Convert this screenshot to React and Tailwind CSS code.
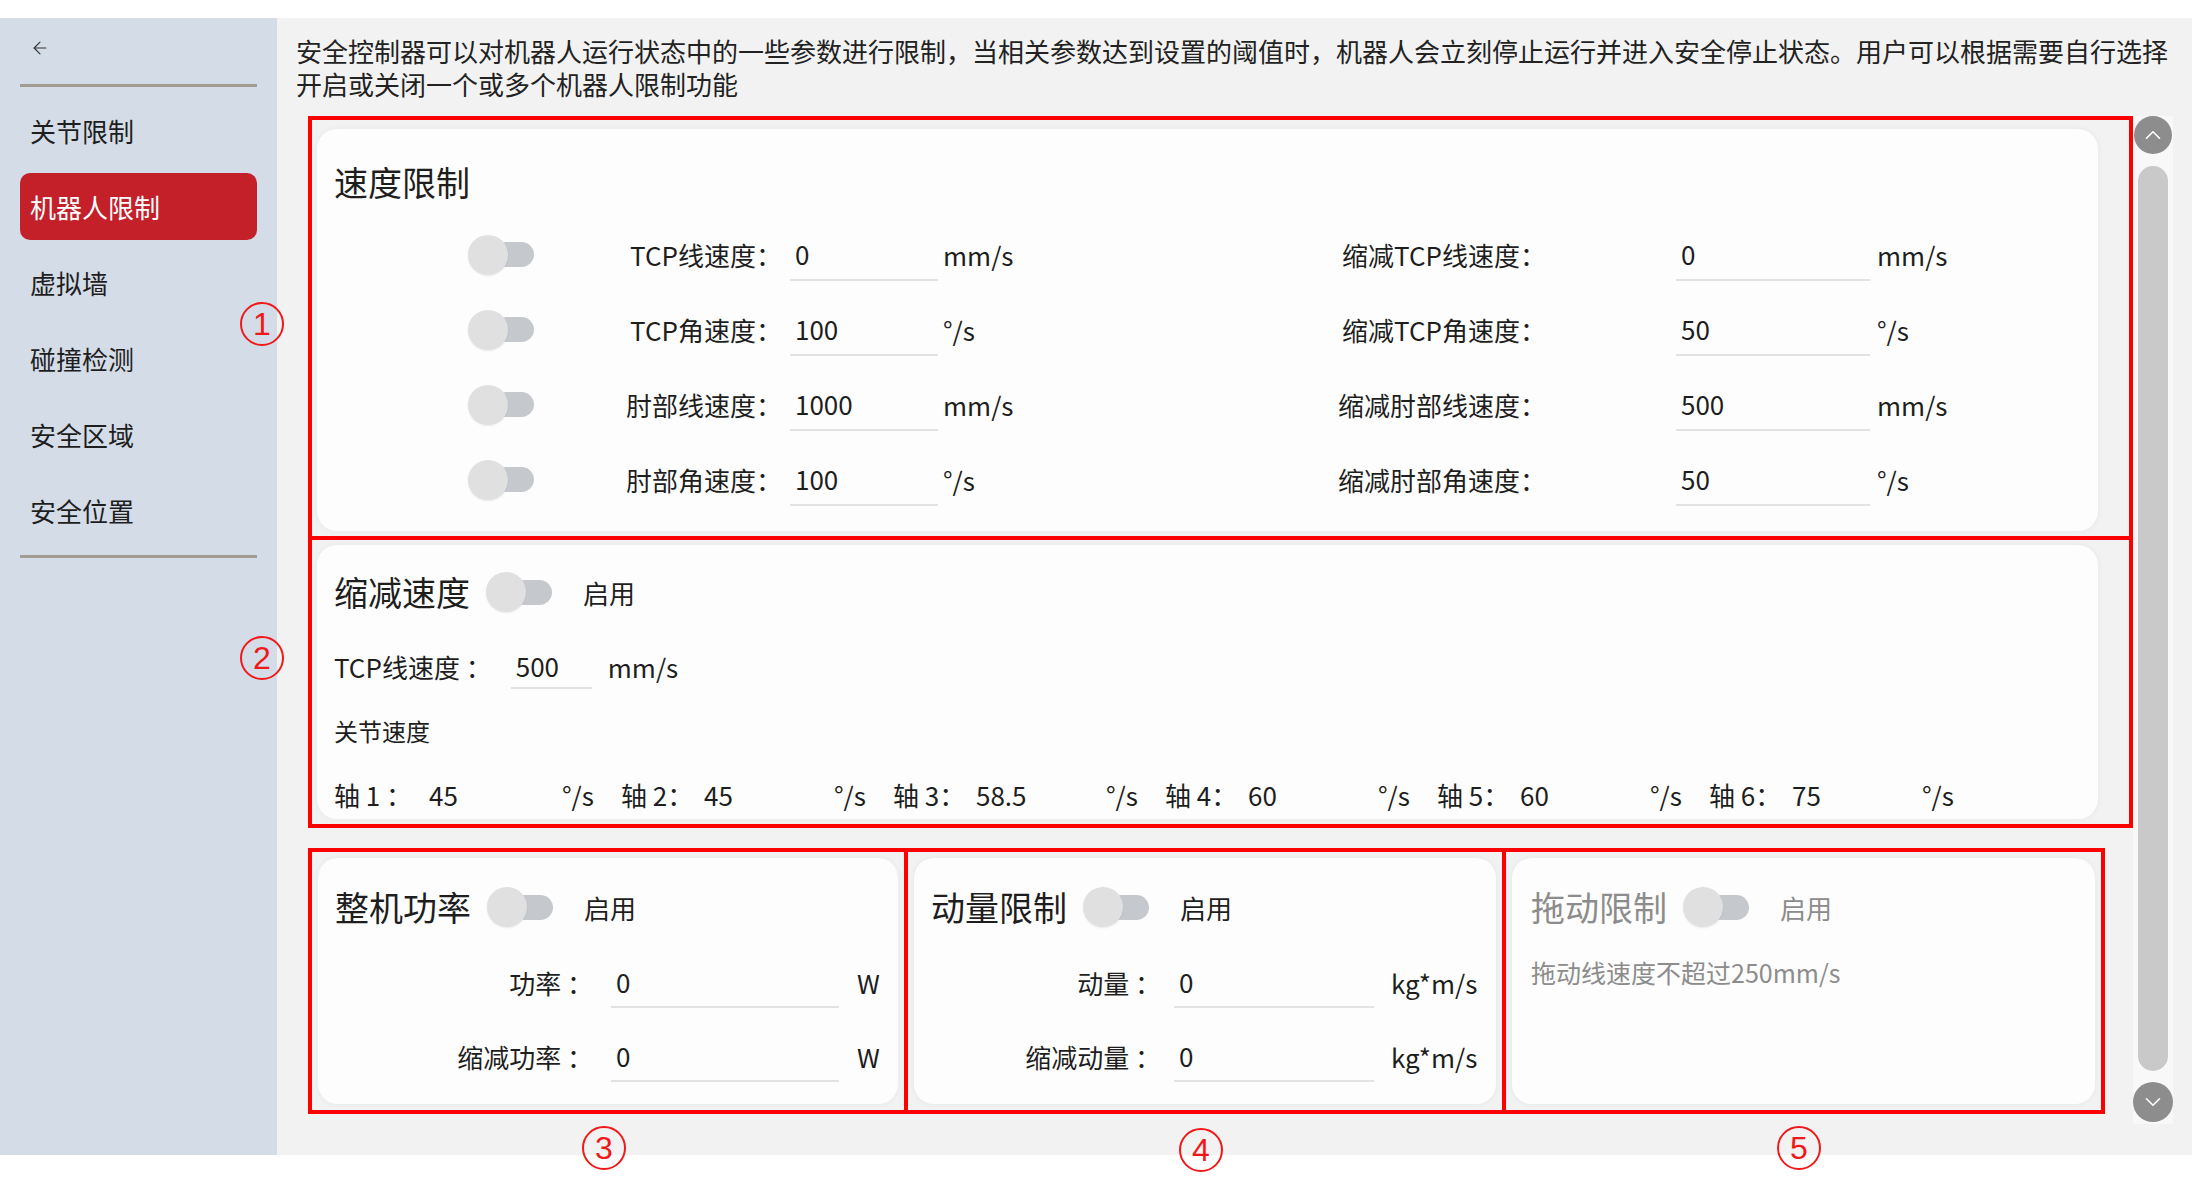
import React from 'react';
import { ArrowLeft, ChevronUp, ChevronDown } from 'lucide-react';

const FONT = { fontFamily: "'Noto Sans CJK SC', 'Noto Sans', sans-serif" };

const speedRows = [
	{ label: 'TCP线速度：', value: '0', unit: 'mm/s', rLabel: '缩减TCP线速度：', rValue: '0', rUnit: 'mm/s' },
	{ label: 'TCP角速度：', value: '100', unit: '°/s', rLabel: '缩减TCP角速度：', rValue: '50', rUnit: '°/s' },
	{ label: '肘部线速度：', value: '1000', unit: 'mm/s', rLabel: '缩减肘部线速度：', rValue: '500', rUnit: 'mm/s' },
	{ label: '肘部角速度：', value: '100', unit: '°/s', rLabel: '缩减肘部角速度：', rValue: '50', rUnit: '°/s' }
];

const axes = [
	{ label: '轴 1 ：', value: '45' },
	{ label: '轴 2：', value: '45' },
	{ label: '轴 3：', value: '58.5' },
	{ label: '轴 4：', value: '60' },
	{ label: '轴 5：', value: '60' },
	{ label: '轴 6：', value: '75' }
];

const menu = ['关节限制', '机器人限制', '虚拟墙', '碰撞检测', '安全区域', '安全位置'];

function Toggle() {
	return (
		<div className="flex items-center w-[66px] h-[40px] shrink-0">
			<div className="relative z-10 w-[40px] h-[40px] rounded-full bg-[#e0e0e0] shadow-[0_1px_2px_rgba(0,0,0,0.08)]" />
			<div className="w-[40px] h-[25px] -ml-[14px] rounded-full bg-[#c5c9ce]" />
		</div>
	);
}

function Field({ value, width, height = 'h-[52px]' }) {
	return (
		<div className={`${height} flex items-center border-b-2 border-[#e2e2e2] pl-[5px] shrink-0`} style={{ width }}>
			{value}
		</div>
	);
}

function Marker({ n, className }) {
	return (
		<div
			className={`absolute w-[44px] h-[44px] rounded-full border-2 border-[#f01818] flex items-center justify-center text-[#f01818] text-[32px] leading-none ${className}`}
			style={{ fontFamily: "'Liberation Sans', sans-serif" }}
		>
			{n}
		</div>
	);
}

function CardTitle({ title, muted }) {
	return (
		<div className={`flex items-center h-[40px] ${muted ? 'text-[#8c8c8c]' : 'text-[#1e1e1e]'}`}>
			<span className="text-[34px] leading-[40px]">{title}</span>
			<div className="ml-[16px]"><Toggle /></div>
			<span className="ml-[31px] text-[26px]">启用</span>
		</div>
	);
}

export default function App() {
	return (
		<div className="relative w-[2208px] h-[1184px] bg-white pt-[18px] text-[#1e1e1e]" style={FONT}>
			<div className="flex h-[1137px]">
				{/* sidebar */}
				<div className="w-[277px] shrink-0 bg-[#d4dce7] px-[20px] pt-[10px]">
					<div className="h-[40px] flex items-center pl-[10px] text-[#333]">
						<ArrowLeft size={20} strokeWidth={1.4} />
					</div>
					<div className="mt-[16px] h-[3px] bg-[#a39c92]" />
					<div className="mt-[10px] flex flex-col gap-[9px]">
						{menu.map(item => (
							<div
								key={item}
								className={`h-[67px] flex items-center pl-[10px] text-[26px] rounded-[10px] ${item === '机器人限制' ? 'bg-[#c3202a] text-white' : 'text-[#1e1e1e]'}`}
							>
								{item}
							</div>
						))}
					</div>
					<div className="mt-[11px] h-[3px] bg-[#a39c92]" />
				</div>

				{/* main */}
				<div className="w-[1915px] bg-[#f2f2f2] pl-[19px] pt-[16px]">
					<p className="w-[1880px] text-[26px] leading-[33px] text-[#222]">
						安全控制器可以对机器人运行状态中的一些参数进行限制，当相关参数达到设置的阈值时，机器人会立刻停止运行并进入安全停止状态。用户可以根据需要自行选择开启或关闭一个或多个机器人限制功能
					</p>

					<div className="mt-[16px] ml-[12px] flex">
						<div className="w-[1825px] text-[26px]">
							{/* 1 speed limit */}
							<div className="h-[424px] border-4 border-[#ff0000] pt-[9px] pl-[5px] pr-[31px] pb-[5px]">
								<div className="h-full bg-[#fdfdfd] rounded-[20px] shadow-[0_0_6px_rgba(0,0,0,0.05)] pt-[33px]">
									<div className="pl-[17px] text-[34px] leading-[40px]">速度限制</div>
									<div className="mt-[15px]">
										{speedRows.map(r => (
											<div key={r.label} className="h-[75px] flex items-center pl-[151px]">
												<Toggle />
												<div className="w-[248px] text-right shrink-0">{r.label}</div>
												<div className="ml-[8px]"><Field value={r.value} width="148px" /></div>
												<div className="w-[358px] pl-[5px] shrink-0">{r.unit}</div>
												<div className="w-[250px] text-right shrink-0">{r.rLabel}</div>
												<div className="ml-[130px]"><Field value={r.rValue} width="194px" /></div>
												<div className="pl-[7px]">{r.rUnit}</div>
											</div>
										))}
									</div>
								</div>
							</div>

							{/* 2 reduced speed */}
							<div className="h-[288px] border-4 border-t-0 border-[#ff0000] pt-[5px] pl-[5px] pr-[31px] pb-[5px]">
								<div className="h-full bg-[#fdfdfd] rounded-[20px] shadow-[0_0_6px_rgba(0,0,0,0.05)] pt-[27px] pl-[17px]">
									<CardTitle title="缩减速度" />
									<div className="mt-[31px] flex items-center h-[46px]">
										<span>TCP线速度 ：</span>
										<div className="ml-[19px]"><Field value="500" width="81px" height="h-[46px]" /></div>
										<span className="ml-[16px]">mm/s</span>
									</div>
									<div className="mt-[25px] leading-[34px] text-[24px]">关节速度</div>
									<div className="mt-[30px] flex items-center leading-[34px]">
										{axes.map((a, i) => (
											<div key={a.label} className="flex shrink-0">
												<span className={i === 0 ? 'w-[95px]' : 'w-[83px]'}>{a.label}</span>
												<span className={i === 0 ? 'w-[133px]' : 'w-[130px]'}>{a.value}</span>
												<span className="w-[59px]">°/s</span>
											</div>
										))}
									</div>
								</div>
							</div>

							{/* 3-5 bottom row */}
							<div className="mt-[20px] flex h-[266px]">
								<div className="w-[600px] border-4 border-[#ff0000] p-[6px]">
									<div className="h-full bg-[#fdfdfd] rounded-[20px] shadow-[0_0_6px_rgba(0,0,0,0.05)] pt-[29px]">
										<div className="pl-[17px]"><CardTitle title="整机功率" /></div>
										<div className="mt-[29px] flex items-center h-[52px]">
											<div className="w-[275px] text-right">功率 ：</div>
											<div className="ml-[18px]"><Field value="0" width="228px" /></div>
											<span className="ml-[18px]">W</span>
										</div>
										<div className="mt-[22px] flex items-center h-[52px]">
											<div className="w-[275px] text-right">缩减功率 ：</div>
											<div className="ml-[18px]"><Field value="0" width="228px" /></div>
											<span className="ml-[18px]">W</span>
										</div>
									</div>
								</div>
								<div className="w-[602px] -ml-[4px] border-4 border-[#ff0000] p-[6px]">
									<div className="h-full bg-[#fdfdfd] rounded-[20px] shadow-[0_0_6px_rgba(0,0,0,0.05)] pt-[29px]">
										<div className="pl-[17px]"><CardTitle title="动量限制" /></div>
										<div className="mt-[29px] flex items-center h-[52px]">
											<div className="w-[247px] text-right">动量 ：</div>
											<div className="ml-[13px]"><Field value="0" width="200px" /></div>
											<span className="ml-[17px]">kg*m/s</span>
										</div>
										<div className="mt-[22px] flex items-center h-[52px]">
											<div className="w-[247px] text-right">缩减动量 ：</div>
											<div className="ml-[13px]"><Field value="0" width="200px" /></div>
											<span className="ml-[17px]">kg*m/s</span>
										</div>
									</div>
								</div>
								<div className="w-[603px] -ml-[4px] border-4 border-[#ff0000] p-[6px]">
									<div className="h-full bg-[#fdfdfd] rounded-[20px] shadow-[0_0_6px_rgba(0,0,0,0.05)] pt-[29px] pl-[19px]">
										<CardTitle title="拖动限制" muted />
										<div className="mt-[28px] leading-[34px] text-[25px] text-[#8c8c8c]">拖动线速度不超过250mm/s</div>
									</div>
								</div>
							</div>
						</div>

						{/* scrollbar */}
						<div className="w-[40px] h-[1008px] bg-[#f8f8f8] flex flex-col items-center">
							<div className="w-[38px] h-[38px] rounded-full bg-[#8d8d8d] flex items-center justify-center text-white">
								<ChevronUp size={26} strokeWidth={1.5} />
							</div>
							<div className="mt-[12px] w-[30px] h-[905px] rounded-full bg-[#c9c9c9]" />
							<div className="mt-[11px] w-[40px] h-[40px] rounded-full bg-[#8d8d8d] flex items-center justify-center text-white">
								<ChevronDown size={26} strokeWidth={1.5} />
							</div>
						</div>
					</div>
				</div>
			</div>

			{/* annotation markers */}
			<Marker n="1" className="left-[240px] top-[302px]" />
			<Marker n="2" className="left-[240px] top-[636px]" />
			<Marker n="3" className="left-[582px] top-[1126px]" />
			<Marker n="4" className="left-[1179px] top-[1128px]" />
			<Marker n="5" className="left-[1777px] top-[1126px]" />
		</div>
	);
}
